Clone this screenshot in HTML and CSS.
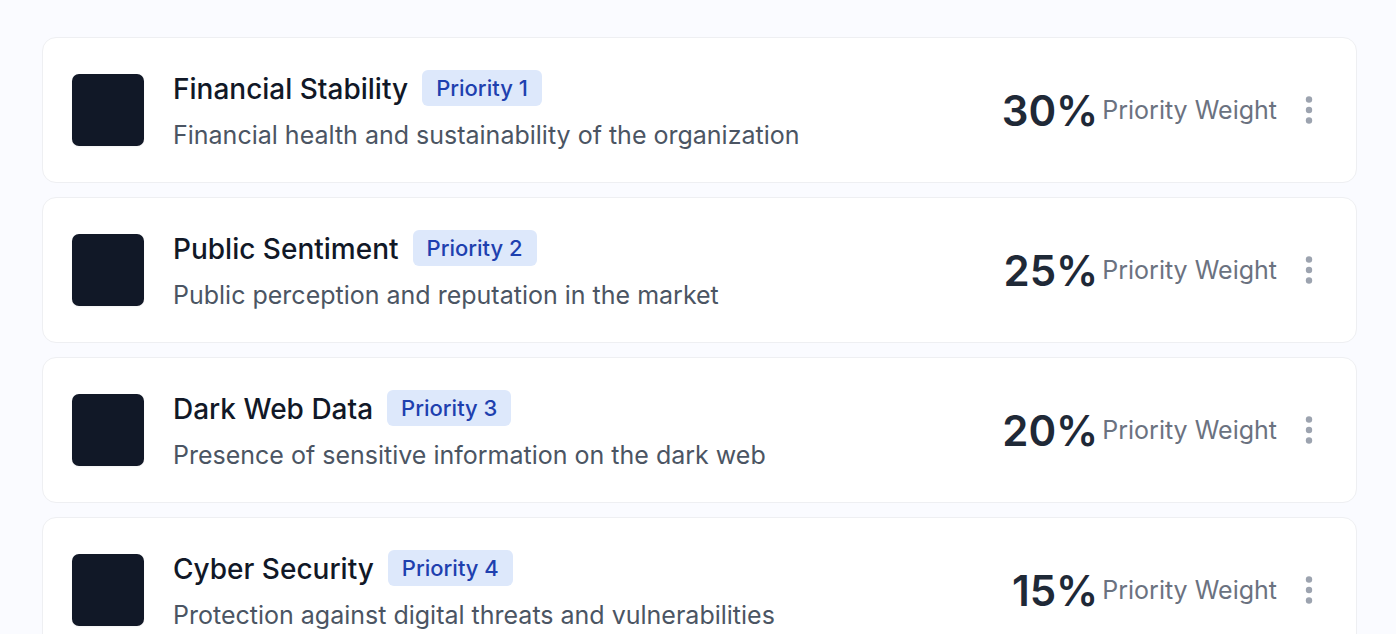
FILE: index.html
```html
<!DOCTYPE html>
<html lang="en">
<head>
<meta charset="utf-8">
<title>Priorities</title>
<link rel="stylesheet" href="styles.css">
</head>
<body>
<main class="list">
  <article class="card">
    <div class="thumb"></div>
    <div class="info">
      <div class="heading"><h2 class="title">Financial Stability</h2><span class="badge">Priority 1</span></div>
      <p class="desc">Financial health and sustainability of the organization</p>
    </div>
    <div class="weight"><strong class="value">30%</strong><span class="label">Priority Weight</span></div>
    <button class="menu" type="button" aria-label="More options"><svg width="8" height="28" viewBox="0 0 8 28" fill="currentColor"><circle cx="4" cy="3.5" r="3.2"/><circle cx="4" cy="14" r="3.2"/><circle cx="4" cy="24.5" r="3.2"/></svg></button>
  </article>
  <article class="card">
    <div class="thumb"></div>
    <div class="info">
      <div class="heading"><h2 class="title">Public Sentiment</h2><span class="badge">Priority 2</span></div>
      <p class="desc">Public perception and reputation in the market</p>
    </div>
    <div class="weight"><strong class="value">25%</strong><span class="label">Priority Weight</span></div>
    <button class="menu" type="button" aria-label="More options"><svg width="8" height="28" viewBox="0 0 8 28" fill="currentColor"><circle cx="4" cy="3.5" r="3.2"/><circle cx="4" cy="14" r="3.2"/><circle cx="4" cy="24.5" r="3.2"/></svg></button>
  </article>
  <article class="card">
    <div class="thumb"></div>
    <div class="info">
      <div class="heading"><h2 class="title">Dark Web Data</h2><span class="badge">Priority 3</span></div>
      <p class="desc">Presence of sensitive information on the dark web</p>
    </div>
    <div class="weight"><strong class="value">20%</strong><span class="label">Priority Weight</span></div>
    <button class="menu" type="button" aria-label="More options"><svg width="8" height="28" viewBox="0 0 8 28" fill="currentColor"><circle cx="4" cy="3.5" r="3.2"/><circle cx="4" cy="14" r="3.2"/><circle cx="4" cy="24.5" r="3.2"/></svg></button>
  </article>
  <article class="card">
    <div class="thumb"></div>
    <div class="info">
      <div class="heading"><h2 class="title">Cyber Security</h2><span class="badge">Priority 4</span></div>
      <p class="desc">Protection against digital threats and vulnerabilities</p>
    </div>
    <div class="weight"><strong class="value">15%</strong><span class="label">Priority Weight</span></div>
    <button class="menu" type="button" aria-label="More options"><svg width="8" height="28" viewBox="0 0 8 28" fill="currentColor"><circle cx="4" cy="3.5" r="3.2"/><circle cx="4" cy="14" r="3.2"/><circle cx="4" cy="24.5" r="3.2"/></svg></button>
  </article>
</main>
</body>
</html>
```
FILE: styles.css
```css
* { box-sizing: border-box; }
body {
  margin: 0;
  background: #fafbff;
  font-family: Inter, "Liberation Sans", sans-serif;
}
.list {
  display: flex;
  flex-direction: column;
  gap: 14px;
  height: 100vh;
  overflow: hidden;
  padding: 37px 39px 0 42px;
}
.card {
  display: flex;
  flex: none;
  align-items: center;
  padding: 27px 29px;
  background: #fff;
  border: 1px solid #eeeff2;
  border-radius: 14px;
}
.thumb {
  flex: none;
  width: 72px;
  height: 72px;
  margin-right: 29px;
  background: #111827;
  border-radius: 7px;
  box-shadow: 0 1px 2px rgba(0, 0, 0, 0.05);
}
.info { flex: 1; min-width: 0; }
.heading { display: flex; align-items: center; gap: 14px; height: 46px; }
.title {
  margin: 0;
  padding-top: 2px;
  font-size: 28px;
  line-height: 44px;
  font-weight: 500;
  color: #111827;
}
.badge {
  padding: 0 14px;
  font-size: 22px;
  line-height: 36px;
  font-weight: 500;
  color: #1e40af;
  background: #dde8fb;
  border-radius: 6px;
}
.desc {
  margin: 4px 0 0;
  font-size: 25px;
  line-height: 40px;
  color: #4b5563;
}
.weight { display: flex; align-items: center; gap: 4px; white-space: nowrap; }
.value { padding-top: 2px; font-size: 42px; line-height: 60px; font-weight: 600; color: #1f2937; }
.label { font-size: 25px; line-height: 40px; color: #6b7280; }
.menu {
  display: flex;
  margin-left: 14px;
  padding: 14px;
  border: 0;
  background: none;
  color: #9ca3af;
  cursor: pointer;
}
```
